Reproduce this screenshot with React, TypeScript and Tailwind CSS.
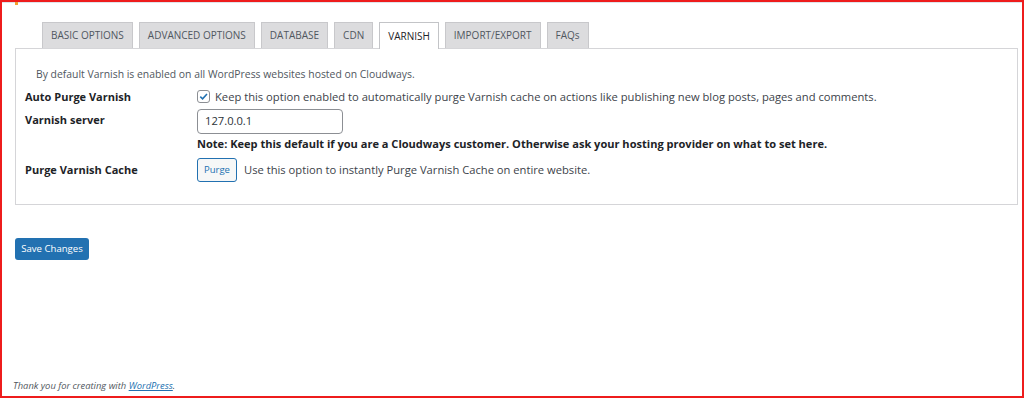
import React from "react";

const tabs = ["BASIC OPTIONS", "ADVANCED OPTIONS", "DATABASE", "CDN", "VARNISH", "IMPORT/EXPORT", "FAQs"];

export default function App() {
  return (
    <div className="w-[1024px] h-[398px] bg-white overflow-hidden" style={{ fontFamily: '"Open Sans", "Noto Sans", sans-serif' }}>
      <div className="h-full border-2 border-[#ee1c1c] border-t-[2px] flex flex-col relative">
        <div className="absolute left-[13px] top-0 w-[3px] h-[3px] bg-[#f0a030]" />
        <div className="h-[1px] bg-[#dfe3ea]" />
        <div className="pl-[13px] pr-[4px] pt-[19px] flex flex-col">
          <div className="flex gap-[6px] pl-[27px] h-[26px] items-end">
            {tabs.map((t) => (
              <div
                key={t}
                className={
                  "h-[26px] px-[8px] flex items-center text-[10px] border border-b-0 " +
                  (t === "VARNISH"
                    ? "bg-white border-[#c3c4c7] text-[#1d2327] relative z-10 h-[27px] -mb-[1px]"
                    : "bg-[#dcdcde] border-[#c8c8cb] text-[#50575e]")
                }
              >
                {t}
              </div>
            ))}
          </div>
          <div className="border border-[#d5d5d8] bg-white pt-[17px] h-[157px]">
            <div className="pl-[20px] text-[10.4px] text-[#50575e] leading-[16px]">
              By default Varnish is enabled on all WordPress websites hosted on Cloudways.
            </div>
            <div className="flex mt-[6px]">
              <div className="w-[181px] pl-[9px] text-[11px] font-bold text-[#1d2327] leading-[16px] pt-[1px]">Auto Purge Varnish</div>
              <div className="flex items-center gap-[5px] text-[11.2px] text-[#3c434a] leading-[16px]">
                <span className="w-[13px] h-[13px] border border-[#8c8f94] rounded-[3px] flex items-center justify-center bg-white">
                  <svg width="11" height="11" viewBox="0 0 12 12"><path d="M2.5 6.2 L5 8.6 L9.8 3.2" stroke="#2271b1" strokeWidth="1.7" fill="none" /></svg>
                </span>
                <span>Keep this option enabled to automatically purge Varnish cache on actions like publishing new blog posts, pages and comments.</span>
              </div>
            </div>
            <div className="flex mt-[4px]">
              <div className="w-[181px] pl-[9px] text-[11px] font-bold text-[#1d2327] leading-[16px] pt-[3px]">Varnish server</div>
              <div className="flex flex-col">
                <div className="w-[146px] h-[25px] border border-[#8c8f94] rounded-[4px] px-[7px] flex items-center text-[11.2px] text-[#2c3338]">127.0.0.1</div>
                <div className="mt-[2px] text-[11.05px] font-bold text-[#1d2327] leading-[16px]">
                  Note: Keep this default if you are a Cloudways customer. Otherwise ask your hosting provider on what to set here.
                </div>
              </div>
            </div>
            <div className="flex mt-[6px] items-center">
              <div className="w-[181px] pl-[9px] text-[11px] font-bold text-[#1d2327] leading-[16px]">Purge Varnish Cache</div>
              <div className="flex items-center gap-[7px]">
                <div className="w-[40px] h-[24px] border border-[#2271b1] rounded-[3px] bg-[#f6f7f7] flex items-center justify-center text-[9.5px] text-[#2271b1]">Purge</div>
                <span className="text-[11.2px] text-[#3c434a]">Use this option to instantly Purge Varnish Cache on entire website.</span>
              </div>
            </div>
          </div>
          <div className="mt-[33px]">
            <div className="w-[74px] h-[22px] bg-[#2271b1] rounded-[3px] text-white text-[9.6px] flex items-center justify-center">Save Changes</div>
          </div>
        </div>
        <div className="mt-auto pl-[11px] pb-[3px] text-[9.4px] italic text-[#50575e]">
          Thank you for creating with <span className="text-[#2271b1] underline">WordPress</span>.
        </div>
      </div>
    </div>
  );
}
